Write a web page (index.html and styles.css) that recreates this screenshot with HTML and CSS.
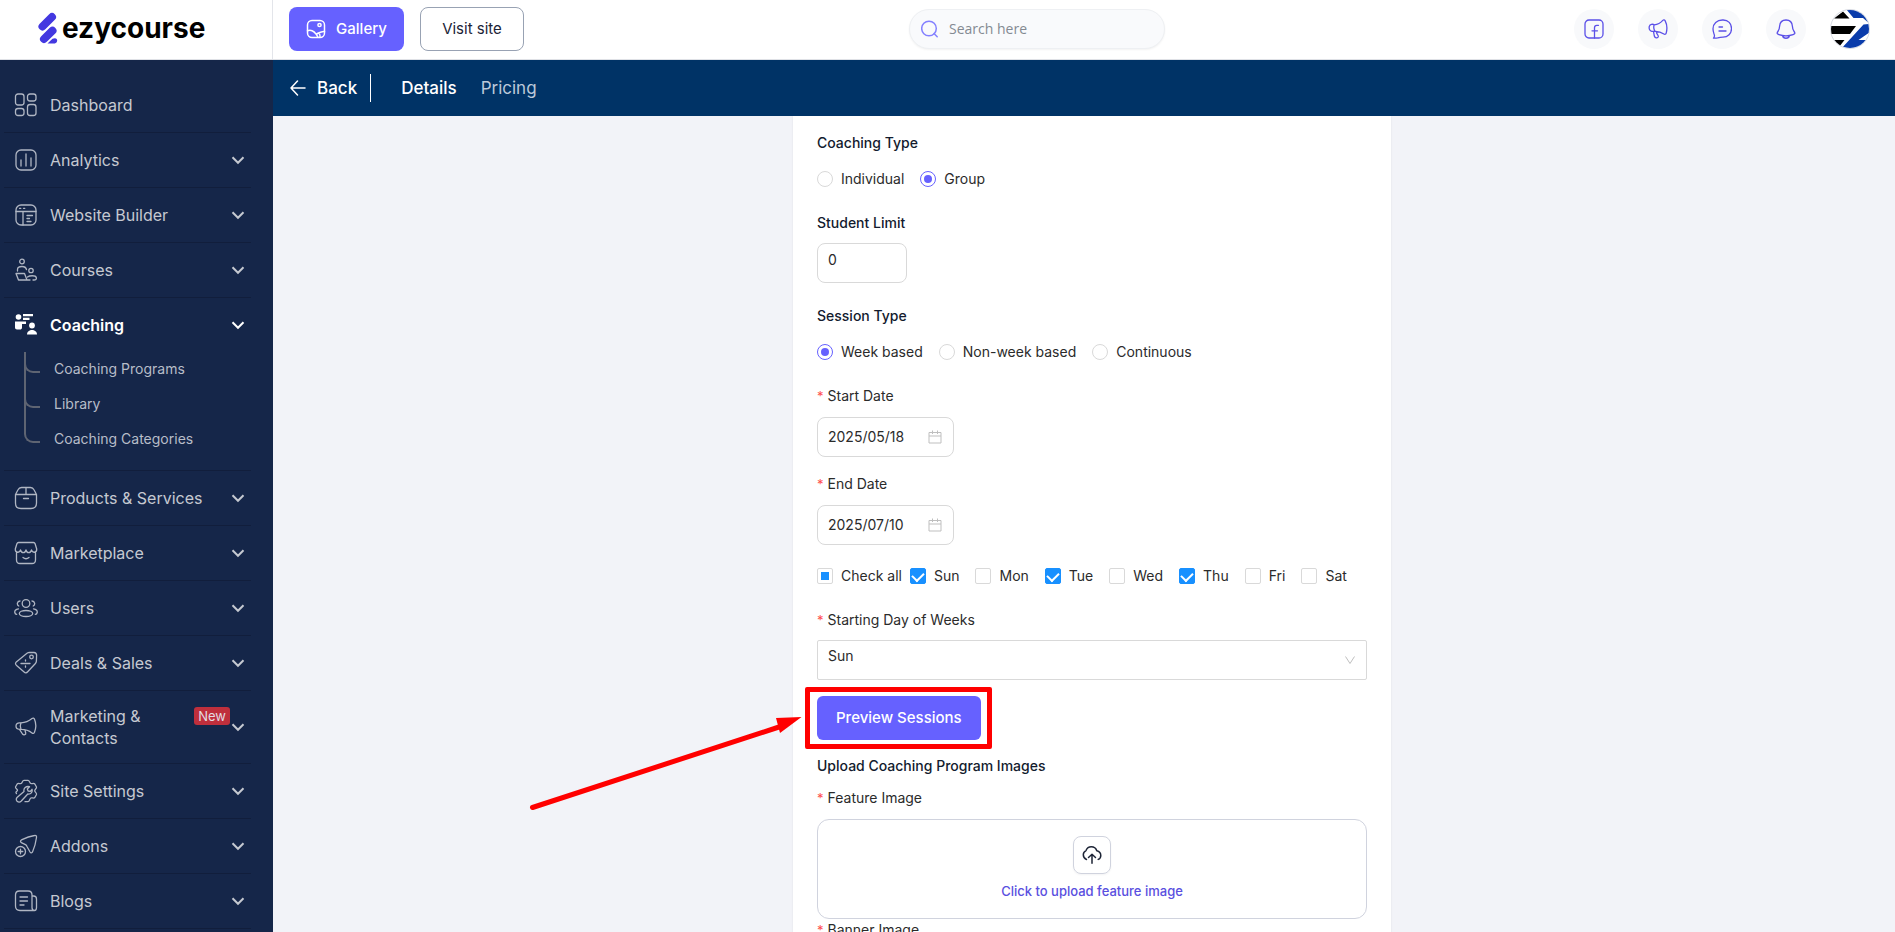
FILE: index.html
```html
<!DOCTYPE html>
<html lang="en">
<head>
    <meta charset="UTF-8">
    <meta name="viewport" content="width=device-width, initial-scale=1.0">
    <title>Coaching Details</title>
    <link rel="stylesheet" href="styles.css">
</head>
<body>
    <!-- Shared symbols -->
    <svg class="sprite" aria-hidden="true">
        <symbol id="chevron" viewBox="0 0 16 16"><path d="M2.5 5.2 8 10.8l5.500-5.600" /></symbol>
        <symbol id="chevron-thin" viewBox="0 0 14 14"><path d="M2.500 3.500 7 10.500l4.500-7" /></symbol>
        <symbol id="calendar" viewBox="0 0 14 14"><path d="M1 2.500h12v10.500H1zM1 6h12M4.500 0.500v3.500M9.500 0.500v3.500" /></symbol>
    </svg>

    <header class="header">
        <a href="#" class="logo">
            <svg width="20" height="32" viewBox="0 0 20 32" aria-hidden="true">
                <g stroke="#4338e0" stroke-width="8" stroke-linecap="round">
                    <path d="M4.500 14.500 14 5" />
                    <path d="M6 27 14.500 18.700" />
                </g>
                <path d="M9.500 31.500 14.500 26.800c3-1.500 5.500 0 4.500 2.600-.5 1.400-1.800 2.100-3.200 2.100z" fill="#4338e0" />
            </svg>
            <span>ezycourse</span>
        </a>
        <div class="header-bar">
            <div class="header-actions">
                <button type="button" class="btn btn-primary">
                    <svg class="icon" width="20" height="20" viewBox="0 0 20 20" aria-hidden="true">
                        <rect x="1.500" y="1.500" width="17" height="17" rx="4.500" />
                        <circle cx="13.500" cy="6" r="1.600" />
                        <path d="M1.500 11.800c4-1.500 7.500.7 10.500 6.500M10.500 15c2.500-1 5-3.200 8-2.500M14 18.300c.2-1.800 0-2.800-.8-4" />
                    </svg>
                    Gallery
                </button>
                <button type="button" class="btn btn-outline">Visit site</button>
            </div>
            <label class="search">
                <svg class="icon" width="18" height="18" viewBox="0 0 18 18" aria-hidden="true">
                    <circle cx="8" cy="8.500" r="7.300" />
                    <path d="m13 13.500 3.200 3.200" />
                </svg>
                <input type="search" placeholder="Search here" aria-label="Search here">
            </label>
            <div class="header-icons">
                <button type="button" class="round-btn" aria-label="Facebook">
                    <svg class="icon" width="20" height="20" viewBox="0 0 20 20"><rect x="1" y="1" width="18" height="18" rx="4" /><path d="M14.500 6.300h-1.700c-1.700 0-2.300 1-2.300 2.500V19M8 11.800h5.500" /></svg>
                </button>
                <button type="button" class="round-btn" aria-label="Announcements">
                    <svg class="icon" width="20" height="20" viewBox="0 0 20 20"><path d="M6.200 5.800C10 5.500 13 3.500 14.800 1.400c.8-.8 2-.5 2.400.5 1.800 3.500 2 8.500 1 12.200-.3 1.100-1.400 1.500-2.300.9-2.600-1.800-5.700-2.900-9.100-2.700M6.200 5.800C4.800 4.800 2 5.200 1.300 7.400.7 10 2 12 3.700 12.300c1.200.2 2.300-.1 3.100-.5M6.200 5.800c-.8 2-.5 4.200.6 6.500M5.500 12.400l.8 4.600c.7 2.300 3.500 2.600 4 .7.300-1.800-1.600-2.300-2-4.900" /></svg>
                </button>
                <button type="button" class="round-btn" aria-label="Messages">
                    <svg class="icon" width="20" height="20" viewBox="0 0 20 20"><path d="M10.400 1h.8c5 0 8.300 3.600 8.300 8.600s-3.600 8.500-8.500 8.500c-2.400 0-3.600.2-5.300.7-1.200.3-2.500.6-4.200.3.700-.8 1.200-1.500.9-3-.4-1.500-1.400-3-1.400-6.300C1 4.500 5 1 10.400 1zM7 8h3.500M7 12h7" /></svg>
                </button>
                <button type="button" class="round-btn" aria-label="Notifications">
                    <svg class="icon" width="20" height="20" viewBox="0 0 20 20"><path d="M10 1C6 1 3.800 3.800 3.600 7.300c-.1 3-.6 3.800-1.700 5.200-1.400 1.900-.7 2.600 1 3.200 4.500 1.500 9.700 1.500 14.200 0 1.700-.6 2.400-1.300 1-3.200-1.100-1.400-1.600-2.200-1.700-5.200C16.200 3.800 14 1 10 1zM6.700 17c.6 3 6 3 6.600 0" /></svg>
                </button>
                <button type="button" class="avatar" aria-label="Account">
                    <svg width="40" height="40" viewBox="0 0 40 40">
                        <defs><clipPath id="avatarClip"><circle cx="20" cy="20" r="19" /></clipPath></defs>
                        <circle cx="20" cy="20" r="19.500" fill="#fff" stroke="#d8dbe3" />
                        <g clip-path="url(#avatarClip)">
                            <path fill="#000" d="M4 9.500 13 2.500 19.500 9.500zM0 17h26l-6 8H0zM2 31h12.500L9 38z" />
                            <path fill="#0a3cab" d="M16 0h24v15L33 9H23.500zM33.500 15.500 40 15v8L28.500 31H40v9H11z" />
                        </g>
                    </svg>
                </button>
            </div>
        </div>
    </header>

    <div class="layout">
        <nav class="sidebar">
            <ul class="menu">
                <li>
                    <a href="#" class="menu-link">
                        <svg class="icon" width="24" height="24" viewBox="0 0 24 24"><rect x="1.500" y="1" width="8.500" height="11" rx="2.500" /><rect x="13.500" y="1" width="8.500" height="7" rx="2.500" /><rect x="1.500" y="15.500" width="8.500" height="7" rx="2.500" /><rect x="13.500" y="11.500" width="8.500" height="11" rx="2.500" /></svg>
                        <span class="menu-text">Dashboard</span>
                    </a>
                </li>
                <li>
                    <a href="#" class="menu-link">
                        <svg class="icon" width="24" height="24" viewBox="0 0 24 24"><rect x="2" y="2" width="20" height="20" rx="5" /><path d="M7 12v6M12 6v12M17 10v8" /></svg>
                        <span class="menu-text">Analytics</span>
                        <svg class="chevron"><use href="#chevron" /></svg>
                    </a>
                </li>
                <li>
                    <a href="#" class="menu-link">
                        <svg class="icon" width="24" height="24" viewBox="0 0 24 24"><rect x="2" y="2" width="20" height="20" rx="5" /><path d="M2 8.500h20M9 8.500V22M5.500 5.300h1.300M9.500 5.300h1.300M13 12.500h5.500M13 15.500h2.500M13 18.500h4" /></svg>
                        <span class="menu-text">Website Builder</span>
                        <svg class="chevron"><use href="#chevron" /></svg>
                    </a>
                </li>
                <li>
                    <a href="#" class="menu-link">
                        <svg class="icon" width="24" height="24" viewBox="0 0 24 24"><circle cx="8" cy="3.500" r="2.300" /><path d="M3.500 13v-1.500C3.500 9.500 5 8.500 8 8.500s4 1 4.500 3M2 15.500h8.500l2.500 6.500H4.500zM5 22h11" /><circle cx="17" cy="12.500" r="2.200" /><path d="M13.500 19c2-1.500 8-2 8.800.5.500 1.800-.8 2.500-2.300 2.500h-1" /></svg>
                        <span class="menu-text">Courses</span>
                        <svg class="chevron"><use href="#chevron" /></svg>
                    </a>
                </li>
                <li>
                    <a href="#" class="menu-link active">
                        <svg class="icon-solid" width="24" height="24" viewBox="0 0 24 24"><circle cx="4.500" cy="4" r="2.800" /><path d="M1 8.500h11v2.500H8v3.500c0 1.500-1 2-2 2H3c-1.200 0-2-.8-2-2zM9 1h10v2.200H9zM9 4.800h6.500V7H9z" /><circle cx="18" cy="12.500" r="2.900" /><path d="M13 21.500c0-6 10-6 10 0z" /></svg>
                        <span class="menu-text">Coaching</span>
                        <svg class="chevron"><use href="#chevron" /></svg>
                    </a>
                    <ul class="submenu">
                        <li><a href="#">Coaching Programs</a></li>
                        <li><a href="#">Library</a></li>
                        <li><a href="#">Coaching Categories</a></li>
                    </ul>
                </li>
                <li>
                    <a href="#" class="menu-link">
                        <svg class="icon" width="24" height="24" viewBox="0 0 24 24"><path d="M1.500 8.500 4 3.800C4.800 2.200 5.500 1.500 7.500 1.500h9c2 0 2.700.7 3.500 2.300l2.500 4.700v8.500c0 4-1.500 5.500-5.500 5.500H7c-4 0-5.500-1.500-5.500-5.500zM1.500 8.500h21M12 1.500v7M9.500 12.500h5" /></svg>
                        <span class="menu-text">Products &amp; Services</span>
                        <svg class="chevron"><use href="#chevron" /></svg>
                    </a>
                </li>
                <li>
                    <a href="#" class="menu-link">
                        <svg class="icon" width="24" height="24" viewBox="0 0 24 24"><path d="M2.500 11.500V19c0 2.500 1 3.500 3.500 3.500h12c2.500 0 3.500-1 3.500-3.500v-7.500M4.500 1.500h15c.8 0 1.300.5 1.600 1.300L22.700 8c.3 4-4.500 4.300-5.200 1-.8 3.500-4.800 3.500-5.500 0-.7 3.500-4.700 3.500-5.500 0C5.800 12.300 1 12 1.300 8l1.600-5.200c.3-.8.800-1.300 1.600-1.300zM9 16.500c1.800 1.500 4.200 1.500 6 0" /></svg>
                        <span class="menu-text">Marketplace</span>
                        <svg class="chevron"><use href="#chevron" /></svg>
                    </a>
                </li>
                <li>
                    <a href="#" class="menu-link">
                        <svg class="icon" width="24" height="24" viewBox="0 0 24 24"><circle cx="12" cy="7.500" r="3.800" /><ellipse cx="12" cy="17.500" rx="6.700" ry="3" /><path d="M6 5C3 5 2.500 8.800 4.800 10M18 5c3 0 3.500 3.800 1.200 5M4.500 12.800C1.500 13.300.5 15 .8 16.500c.2 1 1 1.700 1.900 1.800M19.500 12.800c3 .5 4 2.200 3.700 3.700-.2 1-1 1.700-1.900 1.800" /></svg>
                        <span class="menu-text">Users</span>
                        <svg class="chevron"><use href="#chevron" /></svg>
                    </a>
                </li>
                <li>
                    <a href="#" class="menu-link">
                        <svg class="icon" width="24" height="24" viewBox="0 0 24 24"><path d="M13 2.200c.8-.6 1.500-.9 2.500-.9l4.500.2c1.600.1 2.500 1 2.600 2.600l-.2 6c0 1-.4 1.700-1 2.400l-7.700 8.300c-1.200 1.300-2.400 1.400-3.600.2l-7.500-6.500c-1.300-1.200-1.500-2.300-.3-3.600zM7 12.500h9M11.500 8.800v1.200M11.500 15v1.200" /><circle cx="17.500" cy="6" r="1.800" /></svg>
                        <span class="menu-text">Deals &amp; Sales</span>
                        <svg class="chevron"><use href="#chevron" /></svg>
                    </a>
                </li>
                <li>
                    <a href="#" class="menu-link menu-link-tall">
                        <svg class="icon" width="24" height="24" viewBox="0 0 24 24"><path d="M7 7.800c4-.2 8-1.800 11-4.300 1-.8 2-.5 2.400.6 1.700 4 1.700 9.300 0 13.300-.4 1.100-1.500 1.300-2.400.5-2.800-2.300-6.500-3.600-11-3.600M7 7.800H5.500c-2.300 0-3.500 1.400-3.500 3.300s1.200 3.200 3.500 3.200H7M7 7.800c-.9 2-.9 4.500 0 6.500M5.500 14.300l3 4.700c1.300 1.500 3.700.8 3.200-1.200l-.9-2.800" /></svg>
                        <span class="menu-text">Marketing &amp; Contacts</span>
                        <span class="badge">New</span>
                        <svg class="chevron"><use href="#chevron" /></svg>
                    </a>
                </li>
                <li>
                    <a href="#" class="menu-link">
                        <svg class="icon" width="24" height="24" viewBox="0 0 24 24"><path d="M2.500 14.500C1 13 2.800 12.500 3.500 11.500S1 9.500 1.500 8l1.700-3C4.200 3.800 6 5 7.200 4.500S8.300 1.300 10 1.300h4c1.700 0 1.500 2.700 2.800 3.200s3-.7 4 .5l1.700 3c.5 1.500-1.800 2.300-1.800 3.700s2.300 2.300 1.800 3.800l-1.700 3c-1 1.200-2.700 0-4 .5s-1.100 3.700-2.800 3.700h-3" /><path d="M15.500 7.700 13.300 10l.8 2 2.200.3 1.700-2c.8 2.700-1.200 5.200-4.200 4.700l-6.500 7c-1.200 1.200-3 1.200-4.200.2-1.200-1.200-1-2.900.2-4l6.700-5.700c-.7-3 2-5.800 5.500-4.800z" /></svg>
                        <span class="menu-text">Site Settings</span>
                        <svg class="chevron"><use href="#chevron" /></svg>
                    </a>
                </li>
                <li>
                    <a href="#" class="menu-link">
                        <svg class="icon" width="24" height="24" viewBox="0 0 24 24"><path d="M13 12.500l3 5.500c.8 1.300 2 1.200 2.600-.2 2-4.300 3.200-9.300 3.900-14.300.2-1.500-.5-2.300-2-2-4.300.7-8.700 2.300-12.500 4.200-2 1-2 2.300-.2 3.200l3.700 1.800c.8.400 1.100.9 1.500 1.800z" /><circle cx="6.500" cy="17.500" r="5" /><path d="M6.500 15.200v4.600M4.200 17.500h4.600" /></svg>
                        <span class="menu-text">Addons</span>
                        <svg class="chevron"><use href="#chevron" /></svg>
                    </a>
                </li>
                <li>
                    <a href="#" class="menu-link">
                        <svg class="icon" width="24" height="24" viewBox="0 0 24 24"><path d="M18 18.500V6c0-3-1-4-4-4H5.500c-3 0-4 1-4 4v11c0 3 1.500 4.500 4.500 4.500h14.500c-1.500 0-2.500-1-2.500-3zM18 7h1.500c2 0 3 1 3 3v8.500c0 2-.7 3-2 3M6 8h7.500M6 12h7.500M6 16h4" /></svg>
                        <span class="menu-text">Blogs</span>
                        <svg class="chevron"><use href="#chevron" /></svg>
                    </a>
                </li>
            </ul>
        </nav>

        <div class="content">
            <nav class="tabs">
                <a href="#" class="back">
                    <svg class="icon" width="16" height="16" viewBox="0 0 16 16" aria-hidden="true"><path d="M15 8H1M7.500 1 1 8l6.500 7" /></svg>
                    Back
                </a>
                <a href="#" class="tab active">Details</a>
                <a href="#" class="tab">Pricing</a>
            </nav>

            <main class="page">
                <form class="card">
                    <fieldset class="field type-field">
                        <legend class="title">Coaching Type</legend>
                        <div class="options">
                            <label><input type="radio" name="coachingType"> Individual</label>
                            <label><input type="radio" name="coachingType" checked> Group</label>
                        </div>
                    </fieldset>

                    <div class="field limit-field">
                        <label class="title" for="studentLimit">Student Limit</label>
                        <input type="text" id="studentLimit" class="text-input limit-input" value="0">
                    </div>

                    <fieldset class="field type-field">
                        <legend class="title">Session Type</legend>
                        <div class="options">
                            <label><input type="radio" name="sessionType" checked> Week based</label>
                            <label><input type="radio" name="sessionType"> Non-week based</label>
                            <label><input type="radio" name="sessionType"> Continuous</label>
                        </div>
                    </fieldset>

                    <div class="field date-field">
                        <label class="required" for="startDate">Start Date</label>
                        <div class="date-box">
                            <input type="text" id="startDate" value="2025/05/18">
                            <svg><use href="#calendar" /></svg>
                        </div>
                    </div>

                    <div class="field date-field">
                        <label class="required" for="endDate">End Date</label>
                        <div class="date-box">
                            <input type="text" id="endDate" value="2025/07/10">
                            <svg><use href="#calendar" /></svg>
                        </div>
                    </div>

                    <div class="days">
                        <label><input type="checkbox" id="checkAll"> Check all</label>
                        <div class="options">
                            <label><input type="checkbox" checked> Sun</label>
                            <label><input type="checkbox"> Mon</label>
                            <label><input type="checkbox" checked> Tue</label>
                            <label><input type="checkbox"> Wed</label>
                            <label><input type="checkbox" checked> Thu</label>
                            <label><input type="checkbox"> Fri</label>
                            <label><input type="checkbox"> Sat</label>
                        </div>
                    </div>

                    <div class="field week-field">
                        <label class="required" for="startingDay">Starting Day of Weeks</label>
                        <div class="select-box">
                            <select id="startingDay">
                                <option>Sun</option>
                                <option>Mon</option>
                                <option>Tue</option>
                                <option>Wed</option>
                                <option>Thu</option>
                                <option>Fri</option>
                                <option>Sat</option>
                            </select>
                            <svg><use href="#chevron-thin" /></svg>
                        </div>
                    </div>

                    <div class="preview">
                        <button type="button" class="preview-btn">Preview Sessions</button>
                        <svg class="pointer" width="275" height="96" viewBox="0 0 275 96" aria-hidden="true">
                            <path d="M4.500 91.500 254 10" stroke="#f00" stroke-width="5" stroke-linecap="round" />
                            <path d="M248 2 273.500 1 252 17z" fill="#f00" />
                        </svg>
                    </div>

                    <h2 class="title">Upload Coaching Program Images</h2>
                    <div class="field">
                        <span class="required">Feature Image</span>
                        <button type="button" class="upload">
                            <span class="upload-icon">
                                <svg class="icon" width="20" height="20" viewBox="0 0 20 20" aria-hidden="true"><path d="M4.500 14.500C2.500 13.600 1.300 12 1.300 9.800c0-2 1.200-3.400 2.700-4.200C5 3 7 1.800 9.300 1.800c2.800 0 4.700 1.500 5.500 4 2.500.6 4 2.200 4 4.600 0 1.900-1 3.300-2.600 4M10 18.300V9.500M6.500 12.500 10 9.300l3.500 3.200" /></svg>
                            </span>
                            <span>Click to upload feature image</span>
                        </button>
                    </div>
                    <span class="required">Banner Image</span>
                </form>
            </main>
        </div>
    </div>

    <script>
        // Only some of the days are ticked
        document.getElementById('checkAll').indeterminate = true;
    </script>
</body>
</html>
```
FILE: styles.css
```css
* {
    box-sizing: border-box;
}
body {
    display: flex;
    flex-direction: column;
    height: 100vh;
    margin: 0;
    overflow: hidden;
    font-family: Inter, 'Liberation Sans', sans-serif;
    font-size: 14px;
    line-height: 22px;
    color: #2b2b2b;
    background: #f2f3f8;
}
button, input, select {
    font: inherit;
    color: inherit;
}
button {
    cursor: pointer;
}
a {
    color: inherit;
    text-decoration: none;
}
ul {
    margin: 0;
    padding: 0;
    list-style: none;
}
svg {
    flex: none;
    fill: none;
}
.sprite {
    position: absolute;
    width: 0;
    height: 0;
}
.icon {
    stroke: currentColor;
    stroke-width: 1.5;
    stroke-linecap: round;
    stroke-linejoin: round;
}

/* Header */
.header {
    display: flex;
    flex: none;
    height: 60px;
    background: #fff;
    border-bottom: 1px solid #dfe1e6;
}
.logo {
    display: flex;
    align-items: center;
    gap: 4px;
    width: 273px;
    padding: 0 0 4px 38px;
    border-right: 1px solid #e3e5ea;
    font-size: 28px;
    font-weight: 700;
    color: #000;
}
.header-bar {
    display: flex;
    flex: 1;
    align-items: center;
    justify-content: space-between;
    padding: 0 25px 2px 16px;
}
.header-actions {
    display: flex;
    gap: 16px;
}
.btn {
    display: flex;
    align-items: center;
    justify-content: center;
    gap: 10px;
    height: 44px;
    border-radius: 8px;
    font-size: 15px;
}
.btn-primary {
    width: 115px;
    border: none;
    background: #6661ff;
    color: #fff;
    font-weight: 500;
}
.btn-outline {
    width: 104px;
    border: 1px solid #98a2b3;
    background: #fff;
    color: #1b2337;
}
.search {
    display: flex;
    align-items: center;
    gap: 10px;
    width: 256px;
    height: 40px;
    padding: 0 11px;
    border: 1px solid #eef0f3;
    border-radius: 20px;
    background: #f9fafc;
    box-shadow: 0 1px 2px #0000000d;
    color: #8481ff;
}
.search input {
    width: 100%;
    padding: 0;
    border: none;
    outline: none;
    background: none;
    color: #333;
    font-family: 'Open Sans', sans-serif;
}
.search input::placeholder {
    color: #848a92;
}
.header-icons {
    display: flex;
    gap: 24px;
    padding-left: 24px;
}
.round-btn, .avatar {
    display: flex;
    align-items: center;
    justify-content: center;
    width: 40px;
    height: 40px;
    padding: 0;
    border: none;
    border-radius: 50%;
    background: #f8f9fb;
    color: #5b50e8;
}
.round-btn .icon {
    stroke-width: 1.3;
}

/* Sidebar */
.layout {
    display: flex;
    flex: 1;
    min-height: 0;
}
.sidebar {
    width: 273px;
    padding: 18px 22px 0 4px;
    overflow: hidden;
    background: #152649;
    color: #c5c9d1;
}
.menu > li {
    border-bottom: 1px solid #111e3c;
}
.menu-link {
    display: flex;
    align-items: center;
    gap: 12px;
    height: 54px;
    padding: 0 5px 0 10px;
    font-size: 16px;
}
.menu-link .icon {
    stroke-width: 1.3;
    color: #b0b6c3;
}
.menu-link.active {
    color: #fff;
    font-weight: 600;
}
.menu-link-tall {
    height: 72px;
    gap: 0;
}
.menu-link-tall .menu-text {
    padding: 0 12px;
}
.icon-solid {
    fill: #fff;
}
.menu-text {
    flex: 1;
}
.chevron {
    width: 16px;
    height: 16px;
    stroke: currentColor;
    stroke-width: 2;
}
.badge {
    align-self: flex-start;
    margin: 16px 0 0;
    padding: 0 4px;
    border-radius: 3px;
    background: #bf2f3c;
    font-size: 13px;
    line-height: 18px;
    color: #e3dce2;
}
.submenu {
    display: grid;
    gap: 1px;
    padding-bottom: 14px;
    color: #b7bdc8;
}
.submenu li {
    position: relative;
    padding-left: 50px;
    line-height: 34px;
}
.submenu li::before {
    content: '';
    position: absolute;
    left: 20px;
    top: 0;
    width: 14px;
    height: 19px;
    border: solid #5e6472;
    border-width: 0 0 2px 2px;
    border-bottom-left-radius: 9px;
}
.submenu li:not(:last-child)::after {
    content: '';
    position: absolute;
    left: 20px;
    top: 0;
    width: 2px;
    height: 35px;
    background: #5e6472;
}

/* Tabs under the header */
.content {
    display: flex;
    flex: 1;
    flex-direction: column;
    min-width: 0;
}
.tabs {
    display: flex;
    flex: none;
    align-items: center;
    gap: 24px;
    height: 56px;
    padding-left: 17px;
    background: #003366;
    font-size: 17px;
    color: #bcc9d9;
}
.back {
    display: flex;
    align-items: center;
    gap: 11px;
    height: 28px;
    margin-right: 6px;
    padding-right: 13px;
    border-right: 1px solid #fff;
    color: #fff;
    font-weight: 500;
}
.tab.active {
    color: #fff;
    font-weight: 500;
}

/* Form */
.page {
    flex: 1;
    min-height: 0;
    padding-left: 16px;
    overflow: hidden;
}
.card {
    max-width: 598px;
    margin: 0 auto;
    padding: 16px 24px;
    background: #fff;
    box-shadow: 0 0 2px #00000014;
}
.field {
    display: flex;
    flex-direction: column;
    align-items: flex-start;
    gap: 10px;
    min-width: 0;
    margin: 0;
    padding: 0;
    border: none;
}
.title {
    margin: 0;
    padding: 0;
    font-size: 14px;
    font-weight: 500;
    color: #131b2e;
}
.type-field {
    display: block;
    margin-bottom: 22px;
}
.type-field .options {
    margin-top: 14px;
}
.options {
    display: flex;
    gap: 16px;
}
.options label, .days label {
    display: flex;
    align-items: center;
    gap: 8px;
    white-space: nowrap;
}
.limit-field {
    gap: 9px;
    margin-bottom: 22px;
}
.text-input {
    height: 40px;
    padding: 0 10px 8px;
    border: 1px solid #d9d9d9;
    border-radius: 8px;
}
.limit-input {
    width: 90px;
}
.date-field {
    margin-bottom: 16px;
}
.date-box {
    display: flex;
    align-items: center;
    justify-content: space-between;
    width: 137px;
    height: 40px;
    padding: 0 11px 0 10px;
    border: 1px solid #d9d9d9;
    border-radius: 8px;
}
.date-box input {
    width: 90px;
    padding: 0;
    border: none;
    outline: none;
}
.date-box svg {
    width: 14px;
    height: 14px;
    stroke: #bfbfbf;
}
.required::before {
    content: '*';
    margin-right: 4px;
    color: #ff4d4f;
    font-size: 13px;
}
.days {
    display: flex;
    gap: 8px;
    margin: 20px 0 22px;
}
input[type="radio"], input[type="checkbox"] {
    display: grid;
    place-items: center;
    width: 16px;
    height: 16px;
    margin: 0;
    appearance: none;
    border: 1px solid #d9d9d9;
    background: #fff;
}
input[type="radio"] {
    border-radius: 50%;
}
input[type="radio"]:checked {
    border-color: #6661ff;
}
input[type="radio"]:checked::after {
    content: '';
    width: 8px;
    height: 8px;
    border-radius: 50%;
    background: #6661ff;
}
input[type="checkbox"] {
    border-radius: 2px;
}
input[type="checkbox"]:checked {
    border-color: #1890ff;
    background: #1890ff;
}
input[type="checkbox"]:checked::after {
    content: '';
    width: 6px;
    height: 9px;
    margin-bottom: 2px;
    border: solid #fff;
    border-width: 0 2px 2px 0;
    transform: rotate(45deg);
}
input[type="checkbox"]:indeterminate::after {
    content: '';
    width: 8px;
    height: 8px;
    background: #1890ff;
}
.week-field {
    gap: 9px;
}
.select-box {
    position: relative;
    width: 100%;
}
.select-box select {
    display: block;
    width: 100%;
    height: 40px;
    padding: 0 10px 9px;
    appearance: none;
    border: 1px solid #d9d9d9;
    border-radius: 2px;
    background: #fff;
}
.select-box svg {
    position: absolute;
    right: 10px;
    top: 13px;
    width: 14px;
    height: 14px;
    stroke: #bfbfbf;
    pointer-events: none;
}
.preview {
    position: relative;
    width: fit-content;
    margin: 16px 0 15px;
}
/* red frame round the button */
.preview::after {
    content: '';
    position: absolute;
    inset: -9px -11px -9px -12px;
    border: 5px solid #f00;
    border-radius: 2px;
    pointer-events: none;
}
.preview-btn {
    display: block;
    height: 44px;
    padding: 0 19px;
    border: none;
    border-radius: 6px;
    background: #6661ff;
    color: #fff;
    font-size: 15px;
    font-weight: 500;
}
.pointer {
    position: absolute;
    top: 20px;
    right: calc(100% + 14px);
    pointer-events: none;
}
h2.title {
    margin-bottom: 10px;
    line-height: 22px;
}
.upload {
    display: flex;
    flex-direction: column;
    align-items: center;
    gap: 6px;
    width: 100%;
    min-height: 100px;
    padding: 16px;
    border: 1px solid #d0d3de;
    border-radius: 12px;
    background: #fff;
    color: #5a4fe0;
    font-size: 13px;
    font-weight: 500;
}
.upload-icon {
    display: grid;
    place-items: center;
    width: 38px;
    height: 38px;
    border: 1px solid #d0d3de;
    border-radius: 8px;
    box-shadow: 0 1px 2px #1018280d;
    color: #1d2436;
}
```
